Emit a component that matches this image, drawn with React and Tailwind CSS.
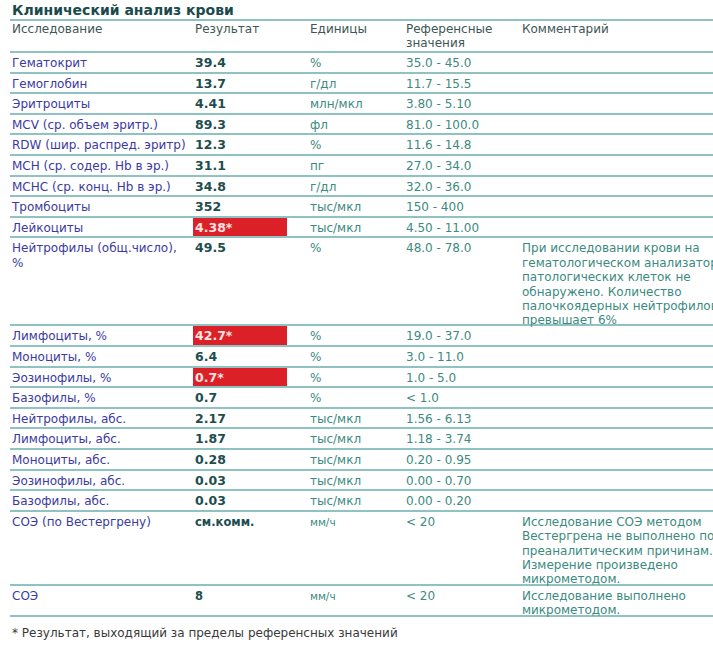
import React from "react";

const rows = [
  { name: "Гематокрит", value: "39.4", unit: "%", ref: "35.0 - 45.0" },
  { name: "Гемоглобин", value: "13.7", unit: "г/дл", ref: "11.7 - 15.5" },
  { name: "Эритроциты", value: "4.41", unit: "млн/мкл", ref: "3.80 - 5.10" },
  { name: "MCV (ср. объем эритр.)", value: "89.3", unit: "фл", ref: "81.0 - 100.0" },
  { name: "RDW (шир. распред. эритр)", value: "12.3", unit: "%", ref: "11.6 - 14.8" },
  { name: "MCH (ср. содер. Hb в эр.)", value: "31.1", unit: "пг", ref: "27.0 - 34.0" },
  { name: "MCHC (ср. конц. Hb в эр.)", value: "34.8", unit: "г/дл", ref: "32.0 - 36.0" },
  { name: "Тромбоциты", value: "352", unit: "тыс/мкл", ref: "150 - 400" },
  { name: "Лейкоциты", value: "4.38*", unit: "тыс/мкл", ref: "4.50 - 11.00", flag: true },
  {
    name: "Нейтрофилы (общ.число), %",
    value: "49.5",
    unit: "%",
    ref: "48.0 - 78.0",
    comment:
      "При исследовании крови на гематологическом анализаторе патологических клеток не обнаружено. Количество палочкоядерных нейтрофилов превышает 6%",
    h: "h-[88px]",
  },
  { name: "Лимфоциты, %", value: "42.7*", unit: "%", ref: "19.0 - 37.0", flag: true },
  { name: "Моноциты, %", value: "6.4", unit: "%", ref: "3.0 - 11.0" },
  { name: "Эозинофилы, %", value: "0.7*", unit: "%", ref: "1.0 - 5.0", flag: true },
  { name: "Базофилы, %", value: "0.7", unit: "%", ref: "< 1.0" },
  { name: "Нейтрофилы, абс.", value: "2.17", unit: "тыс/мкл", ref: "1.56 - 6.13" },
  { name: "Лимфоциты, абс.", value: "1.87", unit: "тыс/мкл", ref: "1.18 - 3.74" },
  { name: "Моноциты, абс.", value: "0.28", unit: "тыс/мкл", ref: "0.20 - 0.95" },
  { name: "Эозинофилы, абс.", value: "0.03", unit: "тыс/мкл", ref: "0.00 - 0.70" },
  { name: "Базофилы, абс.", value: "0.03", unit: "тыс/мкл", ref: "0.00 - 0.20" },
  {
    name: "СОЭ (по Вестергрену)",
    value: "см.комм.",
    unit: "мм/ч",
    ref: "< 20",
    comment:
      "Исследование СОЭ методом Вестергрена не выполнено по преаналитическим причинам. Измерение произведено микрометодом.",
    h: "h-[74px]",
    small: true,
  },
  {
    name: "СОЭ",
    value: "8",
    unit: "мм/ч",
    ref: "< 20",
    comment: "Исследование выполнено микрометодом.",
    h: "h-[31px]",
    small: true,
  },
];

const grid = "grid grid-cols-[183px_115px_96px_116px_1fr]";

function App() {
  return (
    <div
      className="w-[713px] h-[648px] overflow-hidden bg-white text-[12px] leading-[14.4px]"
      style={{ fontFamily: '"DejaVu Sans", "Liberation Sans", sans-serif' }}
    >
      <div className="pl-[12px] pt-[2px] h-[19px] font-bold text-[14px] leading-[16px] text-[#1c4a4c]">
        Клинический анализ крови
      </div>

      <div className="ml-[10px] border-t-2 border-[#8fc2c2]">
        {/* Header */}
        <div className={`${grid} h-[32px] border-b-2 border-[#8fc2c2] pt-[1px] pl-[2px] text-[#3e5656]`}>
          <div>Исследование</div>
          <div>Результат</div>
          <div>Единицы</div>
          <div className="w-[100px]">Референсные значения</div>
          <div>Комментарий</div>
        </div>

        {rows.map((r) => (
          <div
            key={r.name + r.value}
            className={`${grid} ${r.h || "h-[20.6px]"} box-border border-b-2 border-[#8fc2c2] pl-[2px]`}
          >
            <div className="pt-[3px] pr-1 text-[#3b3aa0]">{r.name}</div>
            <div className="-ml-[2px]">
              {r.flag ? (
                <div className="w-[94px] h-[18.6px] bg-[#dc2027] pl-[2px] pt-[3px] font-bold text-[12.5px] text-[#fde3e3]">
                  {r.value}
                </div>
              ) : (
                <div
                  className={`pl-[2px] pt-[3px] font-bold text-[#1e4d4f] ${r.small ? "text-[11.5px]" : "text-[12.5px]"}`}
                >
                  {r.value}
                </div>
              )}
            </div>
            <div className={`pt-[3px] text-[#3c8a80] ${r.small ? "text-[10.5px]" : ""}`}>{r.unit}</div>
            <div className="pt-[3px] text-[#3c8a80]">{r.ref}</div>
            <div className="pt-[3px] w-[205px] whitespace-normal text-[#3c8a80]">{r.comment}</div>
          </div>
        ))}
      </div>

      <div className="pl-[12px] pt-[9px] text-[#3a3a3a]">
        * Результат, выходящий за пределы референсных значений
      </div>
    </div>
  );
}

export default App;
